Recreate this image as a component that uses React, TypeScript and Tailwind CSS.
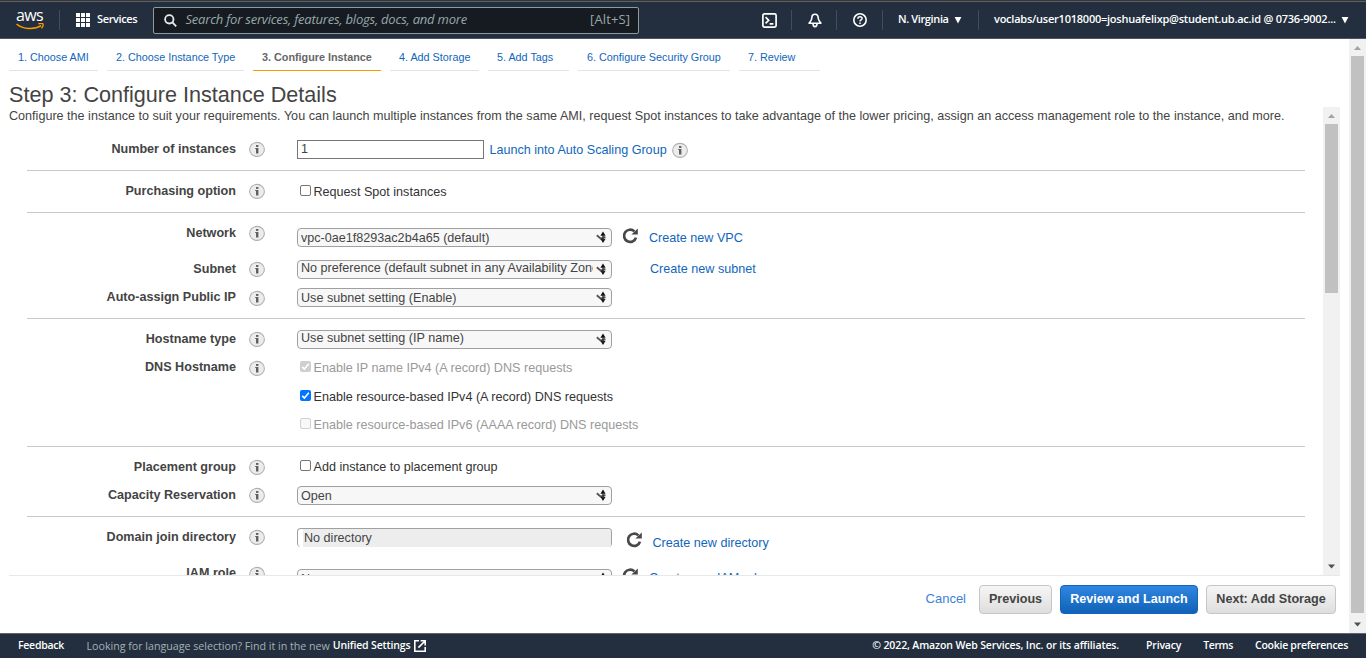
import type { ReactNode } from "react";

function InfoIcon({ className = "" }: { className?: string }) {
  return (
    <svg className={`block h-4 w-4 shrink-0 ${className}`} viewBox="0 0 16 16">
      <ellipse cx="8" cy="8.4" rx="7.4" ry="7" fill="#ececec" stroke="#b0b0b0" strokeWidth="1.1" />
      <rect x="7" y="4" width="2.4" height="1.9" fill="#606060" />
      <path d="M6.2 6.9H9.4V12.6H7V8H6.2Z" fill="#606060" />
    </svg>
  );
}

function RefreshIcon({ className = "" }: { className?: string }) {
  return (
    <svg className={`block h-4 w-4 shrink-0 ${className}`} viewBox="0 0 16 16">
      <path d="M14 9.6A6.1 6.1 0 1 1 12.4 3.4" fill="none" stroke="#484848" strokeWidth="2.7" />
      <path d="M15.8 0.6V6.6H9.4Z" fill="#484848" />
    </svg>
  );
}

function SelectArrows() {
  return (
    <svg className="block h-[13px] w-3 shrink-0" viewBox="0 0 12 13">
      <path d="M0.8 4.2L4.8 7.6L9.4 5.8" fill="none" stroke="#555" strokeWidth="1.9" />
      <path d="M4.4 4.8L7 0.6L9.6 4.8ZM4.4 7.8L7 12L9.6 7.8Z" fill="#111" />
      <path d="M7 4V9" stroke="#333" strokeWidth="1.4" />
    </svg>
  );
}

function Select({ children, className = "", textClass = "mt-px" }: { children: string; className?: string; textClass?: string }) {
  return (
    <div className={`flex h-[19px] w-[315px] shrink-0 items-center rounded-[4px] border border-[#a0a0a0] bg-[#f7f7f7] pr-[3px] pl-[3px] ${className}`}>
      <span className={`w-[292px] overflow-hidden leading-[17px] whitespace-nowrap ${textClass}`}>{children}</span>
      <span className="ml-auto">
        <SelectArrows />
      </span>
    </div>
  );
}

function Checkbox({ label, checked, disabled, className = "", textClass = "" }: { label: string; checked?: boolean; disabled?: boolean; className?: string; textClass?: string }) {
  const box = checked
    ? disabled
      ? "bg-[#cfcfcf]"
      : "bg-[#0075ff]"
    : disabled
      ? "border border-[#d0d0d0] bg-[#f8f8f8]"
      : "border border-[#767676] bg-white";
  return (
    <div className={`flex items-start ${disabled ? "text-[#999]" : "text-[#333]"} ${className}`}>
      <span className={`ml-[3px] block h-[11px] w-[11px] shrink-0 rounded-[2px] ${box}`}>
        {checked && (
          <svg className="block h-[11px] w-[11px]" viewBox="0 0 11 11">
            <path d="M2.2 5.8L4.4 8L8.8 2.8" fill="none" stroke="#fff" strokeWidth="1.7" />
          </svg>
        )}
      </span>
      <span className={`ml-[2.5px] leading-[14px] whitespace-nowrap ${textClass}`}>{label}</span>
    </div>
  );
}

function Row({ label, className, icon = "mt-[3px]", children }: { label: string; className: string; icon?: string; children: ReactNode }) {
  return (
    <div className={`flex items-start ${className}`}>
      <div className="w-[209px] shrink-0 text-right leading-[22px] font-bold whitespace-nowrap">{label}</div>
      <InfoIcon className={`ml-[13px] ${icon}`} />
      <div className="ml-8 flex items-start">{children}</div>
    </div>
  );
}

function Section({ children }: { children: ReactNode }) {
  return <div className="w-[1278px] border-b border-[#c8c8c8] pt-[9px]">{children}</div>;
}

function Link({ children, className = "" }: { children: string; className?: string }) {
  return <a className={`whitespace-nowrap text-[#1166bb] ${className}`}>{children}</a>;
}

function Scrollbar({ className, thumb }: { className: string; thumb: string }) {
  return (
    <div className={`flex w-[17px] shrink-0 flex-col items-center bg-[#f1f1f1] ${className}`}>
      <svg className="h-[17px] w-[17px] shrink-0" viewBox="0 0 17 17">
        <path d="M5 11L8.5 7L12 11Z" fill="#a3a3a3" />
      </svg>
      <div className={`w-[13px] bg-[#c1c1c1] ${thumb}`} />
      <svg className="mt-auto h-[17px] w-[17px] shrink-0" viewBox="0 0 17 17">
        <path d="M5 6.5L8.5 10.5L12 6.5Z" fill="#505050" />
      </svg>
    </div>
  );
}

function Caret() {
  return (
    <svg className="block h-2 w-2" viewBox="0 0 8 8">
      <path d="M0.6 1H7.4L4 7.4Z" fill="#fff" />
    </svg>
  );
}

function Divider({ className }: { className: string }) {
  return <span className={`h-5 w-px shrink-0 bg-[#414d5c] ${className}`} />;
}

function Header() {
  return (
    <header className="flex h-[39px] shrink-0 flex-col border-b border-[#4a5563] bg-[#232f3e] font-['Open_Sans','Noto_Sans',sans-serif] text-[11px] font-semibold text-white">
      <div className="h-px bg-[#35363a]" />
      <div className="h-px bg-[#606164]" />
      <div className="flex h-9 items-center whitespace-nowrap">
        <div className="ml-4 flex w-7 flex-col">
          <span className="h-[13px] text-[16px] leading-[10px] font-medium tracking-[-0.6px]">aws</span>
          <svg className="block h-[8px] w-7" viewBox="0 0 28 8">
            <path d="M0.6 1C7 6.6 18.5 6.8 25.2 2.6" fill="none" stroke="#f90" strokeWidth="1.6" />
            <path d="M22.4 0.8C24.5 0.2 26.3 0.3 27 0.9C27.4 2.1 26.6 4.1 25.4 5.2" fill="none" stroke="#f90" strokeWidth="1.3" />
          </svg>
        </div>
        <Divider className="ml-[15px]" />
        <svg className="ml-4 block h-[14px] w-[14px]" viewBox="0 0 14 14" fill="#fff">
          <path d="M0 0h4v4H0zM5 0h4v4H5zM10 0h4v4h-4zM0 5h4v4H0zM5 5h4v4H5zM10 5h4v4h-4zM0 10h4v4H0zM5 10h4v4H5zM10 10h4v4h-4z" />
        </svg>
        <span className="ml-[7px] w-[56px] pb-px tracking-[-0.38px]">Services</span>
        <div className="flex h-[27px] w-[486px] items-center rounded-[2px] border border-[#8d9b9f] bg-[#161b22] text-[13px] font-normal text-[#98a8a8]">
          <svg className="ml-[10px] block h-[13px] w-[13px]" viewBox="0 0 13 13" fill="none" stroke="#e8eaea" strokeWidth="1.8">
            <circle cx="5.3" cy="5.3" r="4.2" />
            <path d="M8.4 8.4L12.2 12.4" />
          </svg>
          <span className="ml-[8.5px] tracking-[-0.215px] italic">Search for services, features, blogs, docs, and more</span>
          <span className="mr-2 ml-auto tracking-[0.1px]">[Alt+S]</span>
        </div>
        <svg className="ml-[123px] block h-[15px] w-[15px]" viewBox="0 0 15 15" fill="none" stroke="#fff" strokeWidth="1.7">
          <rect x="0.9" y="0.9" width="13.2" height="13.2" rx="1.5" />
          <path d="M3.6 4.2L6.7 7.3L3.6 10.4M7.6 10.8H11.4" />
        </svg>
        <Divider className="ml-[14px]" />
        <svg className="ml-[16px] block h-[15px] w-[14px]" viewBox="0 0 14 15" fill="none" stroke="#fff" strokeWidth="1.6">
          <path d="M7 1.2C4.8 1.2 3.9 2.8 3.9 4.6C3.9 7.2 2.6 8.4 1.1 10.2H12.9C11.4 8.4 10.1 7.2 10.1 4.6C10.1 2.8 9.2 1.2 7 1.2Z" strokeLinejoin="round" />
          <path d="M5 10.8C5 14.6 9 14.6 9 10.8" />
        </svg>
        <Divider className="ml-[14px]" />
        <svg className="ml-4 block h-[14px] w-[14px]" viewBox="0 0 14 14" fill="none" stroke="#fff" strokeWidth="1.6">
          <circle cx="7" cy="7" r="6.2" />
          <path d="M4.9 5.7C4.9 3.1 9.1 3.2 9.1 5.5C9.1 7 7 6.9 7 8.5M7 9.6V11.1" strokeWidth="1.5" />
        </svg>
        <Divider className="ml-[15px]" />
        <span className="ml-[15px] w-[56px] pb-px tracking-[-0.38px]">N. Virginia</span>
        <Caret />
        <Divider className="ml-4" />
        <span className="ml-[15px] w-[347px] pb-px tracking-[-0.235px]">voclabs/user1018000=joshuafelixp@student.ub.ac.id @ 0736-9002...</span>
        <Caret />
      </div>
    </header>
  );
}

const tabs: [string, string][] = [
  ["1. Choose AMI", "w-[89px]"],
  ["2. Choose Instance Type", "w-[137px]"],
  ["3. Configure Instance", "w-[128px]"],
  ["4. Add Storage", "w-[89px]"],
  ["5. Add Tags", "w-[81px]"],
  ["6. Configure Security Group", "w-[152px]"],
  ["7. Review", "w-[81px]"],
];

function Steps() {
  return (
    <nav className="ml-[9px] flex h-8 shrink-0 gap-[9px] text-[10.8px]">
      {tabs.map(([t, w], i) => (
        <div
          key={t}
          className={`h-8 shrink-0 border-b pl-[9px] leading-[36px] whitespace-nowrap ${w} ${i === 2 ? "border-[#f90] font-bold text-[#666]" : "border-[#e4e4e4] text-[#1166bb]"}`}
        >
          {t}
        </div>
      ))}
    </nav>
  );
}

function Form() {
  return (
    <div className="min-w-0 flex-1 pl-[18px]">
      <Section>
        <Row label="Number of instances" className="h-8">
          <div className="mt-[2px] h-[19px] w-[187px] border border-[#767676] bg-white pl-[3px] leading-[16px]">1</div>
          <Link className="ml-[5.5px] leading-[24px]">Launch into Auto Scaling Group</Link>
          <InfoIcon className="mt-[4px] ml-[5.5px]" />
        </Row>
      </Section>
      <Section>
        <Row label="Purchasing option" className="h-8">
          <Checkbox label="Request Spot instances" className="mt-[5px]" />
        </Row>
      </Section>
      <Section>
        <Row label="Network" className="h-9">
          <Select className="mt-[6px]">vpc-0ae1f8293ac2b4a65 (default)</Select>
          <RefreshIcon className="mt-[6px] ml-[10px]" />
          <Link className="ml-[11px] leading-[32px]">Create new VPC</Link>
        </Row>
        <Row label="Subnet" className="h-7">
          <Select className="mt-[2px]" textClass="-mt-[2px]">No preference (default subnet in any Availability Zone)</Select>
          <Link className="ml-[38px] leading-[23px]">Create new subnet</Link>
        </Row>
        <Row label="Auto-assign Public IP" className="h-8" icon="mt-[4px]">
          <Select className="mt-[2px]">Use subnet setting (Enable)</Select>
        </Row>
      </Section>
      <Section>
        <Row label="Hostname type" className="h-7">
          <Select className="mt-[2px]" textClass="-mt-[2px]">Use subnet setting (IP name)</Select>
        </Row>
        <Row label="DNS Hostname" className="h-[90px]" icon="mt-[4px]">
          <div>
            <Checkbox label="Enable IP name IPv4 (A record) DNS requests" checked disabled className="mt-[5px] h-[29px]" />
            <Checkbox label="Enable resource-based IPv4 (A record) DNS requests" checked className="h-7" />
            <Checkbox label="Enable resource-based IPv6 (AAAA record) DNS requests" disabled className="h-4" />
          </div>
        </Row>
      </Section>
      <Section>
        <Row label="Placement group" className="h-7">
          <Checkbox label="Add instance to placement group" className="mt-[4px]" />
        </Row>
        <Row label="Capacity Reservation" className="h-8">
          <Select className="mt-[2px]">Open</Select>
        </Row>
      </Section>
      <div className="pt-[9px]">
        <Row label="Domain join directory" className="h-9">
          <div className="mt-[2px] h-[19px] w-[315px] rounded-[4px] border border-b-0 border-[#a0a0a0] pl-[5px]">
            <div className="h-[18px] rounded-r-[3px] bg-[#ededed] pl-px leading-[19px]">No directory</div>
          </div>
          <RefreshIcon className="mt-[6px] ml-[14px]" />
          <Link className="ml-[10.5px] leading-[34px]">Create new directory</Link>
        </Row>
        <Row label="IAM role" className="h-8" icon="mt-[4px]">
          <Select className="mt-[7px]">None</Select>
          <RefreshIcon className="mt-[6px] ml-[10px]" />
          <Link className="ml-[11px] leading-[32px]">Create new IAM role</Link>
        </Row>
      </div>
    </div>
  );
}

function Button({ children, className }: { children: string; className: string }) {
  return <button className={`h-[29px] shrink-0 rounded-[4px] border bg-linear-to-b pb-px text-center leading-[25px] font-bold whitespace-nowrap ${className}`}>{children}</button>;
}

export default function App() {
  return (
    <div className="flex h-[658px] w-[1366px] flex-col overflow-hidden bg-white font-['Liberation_Sans',Arial,sans-serif] text-[12.6px] text-[#444]">
      <Header />
      <div className="flex h-[594px] shrink-0">
        <main className="flex w-[1349px] shrink-0 flex-col">
          <Steps />
          <h1 className="ml-[9px] h-9 shrink-0 pt-[12px] text-[21.6px] leading-6">Step 3: Configure Instance Details</h1>
          <div className="ml-[9px] flex h-[469px] w-[1331px] shrink-0 overflow-hidden border-b border-[#e8e8e8]">
            <div className="flex h-[468px] w-[1314px] flex-col overflow-hidden">
              <p className="h-[22px] shrink-0 leading-[18px] whitespace-nowrap">
                Configure the instance to suit your requirements. You can launch multiple instances from the same AMI, request Spot instances to take advantage of the lower pricing, assign an access management role to the instance, and more.
              </p>
              <Form />
            </div>
            <Scrollbar className="h-[468px]" thumb="h-[169px]" />
          </div>
          <div className="flex items-start justify-end gap-2 pt-[9px] pr-[13px]">
            <a className="mr-[5px] text-[13px] leading-[27px] text-[#3b82d6]">Cancel</a>
            <Button className="w-[73px] border-[#c6c6c6] from-[#f6f6f6] to-[#dedede] text-[#444]">Previous</Button>
            <Button className="w-[138px] border-[#1166bb] from-[#2f86e0] to-[#1062b8] text-white">Review and Launch</Button>
            <Button className="w-[130px] border-[#c6c6c6] from-[#f6f6f6] to-[#dedede] text-[#444]">Next: Add Storage</Button>
          </div>
        </main>
        <Scrollbar className="h-[594px]" thumb="h-[557px]" />
      </div>
      <footer className="flex h-[25px] shrink-0 items-center border-t border-[#5b6673] bg-[#232f3e] font-['Open_Sans','Noto_Sans',sans-serif] text-[10.5px] font-semibold whitespace-nowrap text-white">
        <span className="ml-[18px] w-[68.5px] tracking-[-0.27px]">Feedback</span>
        <span className="text-[10.7px] font-normal tracking-[-0.02px] text-[#a3b1b6]">Looking for language selection? Find it in the new</span>
        <span className="ml-[3px] tracking-[-0.15px]">Unified Settings</span>
        <svg className="ml-[3px] block h-3 w-3" viewBox="0 0 12 12" fill="none" stroke="#fff" strokeWidth="1.6">
          <path d="M5 0.8H0.8V11.2H11.2V7M6.6 0.8H11.2V5.4M11 1L4.4 7.6" />
        </svg>
        <span className="mr-[27px] ml-auto tracking-[-0.12px]">© 2022, Amazon Web Services, Inc. or its affiliates.</span>
        <span className="mr-[22px] tracking-[-0.2px]">Privacy</span>
        <span className="mr-[22px] tracking-[-0.35px]">Terms</span>
        <span className="mr-[18px] tracking-[-0.27px]">Cookie preferences</span>
      </footer>
    </div>
  );
}
